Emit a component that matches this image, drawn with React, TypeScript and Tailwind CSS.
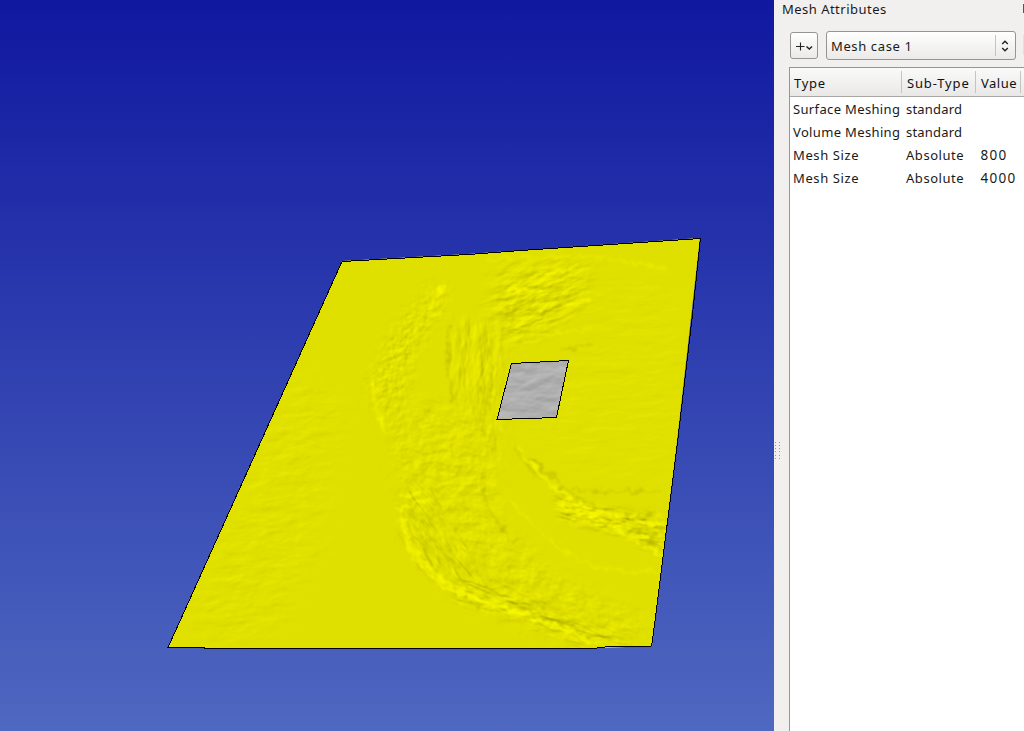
import React from "react";

type Row = { type: string; sub: string; value: string };

const rows: Row[] = [
  { type: "Surface Meshing", sub: "standard", value: "" },
  { type: "Volume Meshing", sub: "standard", value: "" },
  { type: "Mesh Size", sub: "Absolute", value: "800" },
  { type: "Mesh Size", sub: "Absolute", value: "4000" },
];

type Relief = {
  id: string;
  freq: string;
  seed: number;
  scale: number;
  angle: number;
  blur: number;
  shape: string;
  opacity: number;
};

// Each entry is a patch of rough ground: grain direction, grain size and outline.
const reliefs: Relief[] = [
  { id: "west", freq: "0.04 0.09", seed: 4, scale: 0.42, angle: -6, blur: 16, opacity: 0.9, shape: "M290 370L350 400L330 480L320 560L270 640L180 640L240 490Z" },
  { id: "north", freq: "0.05 0.12", seed: 8, scale: 1.15, angle: -14, blur: 10, opacity: 0.9, shape: "M500 268L590 262L600 300L550 330L500 350L488 310Z" },
  { id: "northeast", freq: "0.03 0.09", seed: 12, scale: 0.28, angle: -2, blur: 14, opacity: 0.8, shape: "M590 270L675 270L690 340L665 490L560 470L520 440L570 340Z" },
  { id: "spine", freq: "0.1 0.035", seed: 3, scale: 1.05, angle: 2, blur: 8, opacity: 0.9, shape: "M450 320L505 320L500 440L490 520L475 500L455 410Z" },
  { id: "rim", freq: "0.13 0.15", seed: 5, scale: 0.8, angle: 20, blur: 10, opacity: 0.9, shape: "M430 285L450 290L415 350L400 410L440 450L425 500L405 500L390 420L368 390L385 345Z" },
  { id: "centre", freq: "0.06 0.09", seed: 15, scale: 0.9, angle: 22, blur: 12, opacity: 0.9, shape: "M400 400L490 410L500 530L580 590L650 620L640 645L570 642L460 600L405 530Z" },
  { id: "curve", freq: "0.045 0.2", seed: 21, scale: 1.4, angle: 50, blur: 7, opacity: 0.9, shape: "M400 495L430 480L455 530L500 585L475 600L425 570L400 530Z" },
  { id: "scree", freq: "0.05 0.18", seed: 19, scale: 1.5, angle: 22, blur: 5, opacity: 0.9, shape: "M455 575L500 583L570 615L640 645L575 646L520 620L455 603Z" },
  { id: "east", freq: "0.05 0.16", seed: 7, scale: 1.9, angle: 14, blur: 5, opacity: 0.95, shape: "M555 495L610 510L665 515L660 555L625 535L560 520Z" },
];

const darkRidges = [
  "M508 436Q525 456 552 478M562 488L600 492L662 492",
  "M515 447L530 460L545 470L560 480",
  "M518 455Q532 475 556 487T605 511L660 518",
  "M484 475Q481 500 496 522T520 540",
  "M490 338Q493 382 488 410",
  "M480 385Q486 405 482 437",
  "M449 325Q445 370 453 402",
  "M507 308L538 302L578 294M502 320L550 311M560 350L591 344",
  "M418 565Q440 590 480 607",
  "M630 528L658 538M628 537L660 548M633 526L662 530",
  "M510 602Q550 617 588 637M532 601L575 621",
  "M406 520Q412 548 430 565M411 510Q420 545 442 564M420 513Q430 545 455 565",
];

const brightRidges = [
  "M402 520Q404 548 425 570T475 600Q520 613 555 626T590 642",
  "M405 520Q410 550 434 572T480 600Q510 606 550 625",
  "M520 448Q535 472 558 490T595 512L660 525",
  "M558 504L600 520L635 540L660 555",
  "M420 492L402 496M430 498L401 508",
  "M536 275L570 270M508 288L540 292M565 305L590 300",
  "M377 418L385 430M372 382L376 390",
  "M430 308L443 285M432 317L440 312",
];

const faintRidges = [
  "M488 260L530 257Q620 255 665 269",
  "M510 499Q540 535 570 555T662 570",
  "M500 345Q540 333 590 330",
  "M498 425L520 450M370 385Q372 405 385 425",
];

function Terrain() {
  return (
    <svg width="774" height="731" viewBox="0 0 774 731" className="block">
      <defs>
        <linearGradient id="sky" x1="0" y1="0" x2="0" y2="1">
          <stop offset="0" stopColor="#1018a0" />
          <stop offset="1" stopColor="#4f68c0" />
        </linearGradient>
        <clipPath id="land">
          <path d="M342 261L468 254L700 238L676 450L652 646L600 648H205L168 647Z" />
        </clipPath>
        <clipPath id="inset">
          <path d="M511 364L568 360L556 418L497 419Z" />
        </clipPath>
        <filter id="soft" x="-10%" y="-10%" width="120%" height="120%">
          <feTurbulence type="fractalNoise" baseFrequency="0.13" numOctaves={3} seed={2} result="n" />
          <feDisplacementMap in="SourceGraphic" in2="n" scale="11" xChannelSelector="R" yChannelSelector="G" />
          <feGaussianBlur stdDeviation="0.8" />
        </filter>
        <filter id="rock" filterUnits="userSpaceOnUse" x="480" y="345" width="110" height="90" colorInterpolationFilters="sRGB">
          <feTurbulence type="fractalNoise" baseFrequency="0.04 0.07" numOctaves={3} seed={11} />
          <feDiffuseLighting surfaceScale={0.8} diffuseConstant={1} lightingColor="#c8c8c8">
            <feDistantLight azimuth={250} elevation={61} />
          </feDiffuseLighting>
        </filter>
        {reliefs.map((r) => (
          <React.Fragment key={r.id}>
            <filter id={`f-${r.id}`} filterUnits="userSpaceOnUse" x="-100" y="-100" width="1000" height="1000" colorInterpolationFilters="sRGB">
              <feTurbulence type="fractalNoise" baseFrequency={r.freq} numOctaves={3} seed={r.seed} />
              <feDiffuseLighting surfaceScale={r.scale} diffuseConstant={1} lightingColor="#ffff00">
                <feDistantLight azimuth={225 - r.angle} elevation={61.4} />
              </feDiffuseLighting>
            </filter>
            <filter id={`b-${r.id}`} x="-30%" y="-30%" width="160%" height="160%">
              <feGaussianBlur stdDeviation={r.blur} />
            </filter>
            <mask id={`m-${r.id}`} maskUnits="userSpaceOnUse" x="0" y="0" width="774" height="731">
              <path d={r.shape} fill="#fff" fillOpacity={r.opacity} filter={`url(#b-${r.id})`} />
            </mask>
          </React.Fragment>
        ))}
      </defs>
      <rect width="774" height="731" fill="url(#sky)" />
      <g clipPath="url(#land)">
        <rect x="160" y="230" width="550" height="425" fill="#e0e000" />
        {reliefs.map((r) => (
          <g key={r.id} mask={`url(#m-${r.id})`}>
            <g transform={`rotate(${r.angle} 450 450)`}>
              <rect x="-100" y="-100" width="1000" height="1000" filter={`url(#f-${r.id})`} />
            </g>
          </g>
        ))}
        <g fill="none" strokeLinecap="round" filter="url(#soft)">
          {darkRidges.map((d) => (
            <path key={d} d={d} stroke="#a4a400" strokeWidth="1.7" strokeOpacity="0.45" />
          ))}
          {brightRidges.map((d) => (
            <path key={d} d={d} stroke="#ffff00" strokeWidth="2.6" strokeOpacity="0.7" />
          ))}
          {faintRidges.map((d) => (
            <path key={d} d={d} stroke="#f4f400" strokeWidth="2.4" strokeOpacity="0.4" />
          ))}
        </g>
      </g>
      <g clipPath="url(#inset)">
        <rect x="480" y="345" width="110" height="90" filter="url(#rock)" />
      </g>
      <g fill="none" stroke="#000" strokeWidth="1" shapeRendering="crispEdges">
        <path d="M342.5 261.5L468.5 254.5L520.5 250.5L700.4 238.5L692.5 314.5L676.5 450.5L652.5 640.5L651.5 645.5L650.5 646.5L608.5 646.5L593.5 648.5H205.5L203.5 647.5H168L341.5 262.5Z" />
        <path d="M511.5 363.5L568.5 360.5L556.5 417.5L497 419.5Z" />
      </g>
    </svg>
  );
}

function Splitter() {
  return (
    <div className="grid h-[18px] w-[5px] grid-cols-2 gap-x-[2px] gap-y-[2px]">
      {Array.from({ length: 12 }, (_, i) => (
        <span key={i} className="h-px w-px bg-[#9c9a97]" />
      ))}
    </div>
  );
}

export default function App() {
  return (
    <div className="flex h-[731px] w-[1024px] overflow-hidden bg-[#f1f0ee] font-['Noto_Sans',sans-serif] text-[13px] text-[#1a1a1a]">
      <main className="w-[774px] shrink-0">
        <Terrain />
      </main>
      <div className="flex w-[8px] shrink-0 items-center pt-[170px] pl-px">
        <Splitter />
      </div>
      <aside className="flex w-[242px] shrink-0 flex-col">
        <header className="flex h-[31px] shrink-0 items-start justify-between">
          <h1 className="text-[13px] leading-[19px] tracking-[0.48px]">Mesh Attributes</h1>
          <span className="mt-[4px] h-[9px] w-px bg-[#555]" />
        </header>
        <div className="flex h-[36px] shrink-0 pl-[8px]">
          <button className="mt-px flex h-[27px] w-[28px] items-center justify-center rounded-[3px] border border-[#979592] bg-linear-to-b from-white to-[#ebeae8]">
            <svg width="20" height="16" viewBox="0 0 20 16" fill="none" stroke="#222">
              <path d="M2 8.5H10.5M6.5 4.5V12.5" strokeWidth="1.1" />
              <path d="M12.5 8.5L15.3 11L18 8.5" strokeWidth="1.5" />
            </svg>
          </button>
          <button className="ml-[8px] flex h-[29px] w-[190px] items-center rounded-[3px] border border-[#979592] bg-linear-to-b from-white to-[#ebeae8] pl-[4px] text-left">
            <span className="flex-1 pt-[2px] tracking-[0.62px]">Mesh case 1</span>
            <span className="h-[21px] w-px bg-[#c6c4c1]" />
            <svg width="18" height="16" viewBox="0 0 18 16" fill="none" stroke="#222" strokeWidth="1.4" className="mr-px">
              <path d="M6.2 6L9 3.2L11.8 6M6.2 10L9 12.8L11.8 10" />
            </svg>
          </button>
          <span className="mt-[4px] ml-[7px] h-[20px] w-px bg-[#e2e1df]" />
        </div>
        <section className="ml-[7px] flex-1 border-t border-l border-[#979592] bg-white">
          <div className="flex h-[29px] items-center border-b border-[#aaa8a5] bg-linear-to-b from-[#fafafa] to-[#e9e8e6] text-[#111]">
            <div className="flex h-[22px] w-[112px] items-center border-r border-[#c6c4c1] pt-[3px] pl-[4px] tracking-[0.75px]">Type</div>
            <div className="flex h-[22px] w-[74px] items-center border-r border-[#c6c4c1] pt-[3px] pl-[5px] tracking-[0.85px]">Sub-Type</div>
            <div className="flex h-[22px] w-[45px] items-center border-r border-[#c6c4c1] pt-[3px] pl-[5px] tracking-[0.5px]">Value</div>
          </div>
          <div className="pt-px">
            {rows.map((r, i) => (
              <div key={i} className="flex h-[23px] items-center whitespace-nowrap">
                <span className={i < 2 ? "w-[113px] pl-[3px] tracking-[0.35px]" : "w-[113px] pl-[3px] tracking-[0.6px]"}>{r.type}</span>
                <span className={i < 2 ? "w-[74px] pl-[3px] tracking-[0.2px]" : "w-[74px] pl-[3px] tracking-[0.55px]"}>{r.sub}</span>
                <span className="pl-[3.5px] text-[13.5px] tracking-[1.3px]">{r.value}</span>
              </div>
            ))}
          </div>
        </section>
      </aside>
    </div>
  );
}
